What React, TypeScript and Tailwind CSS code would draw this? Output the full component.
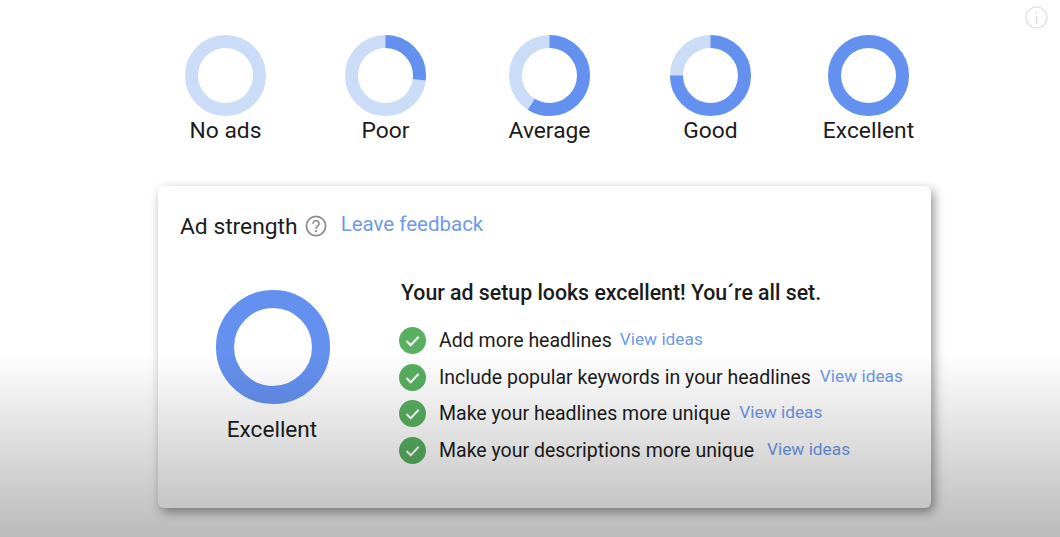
import React from "react"

const BLUE = "#6491ef"
const LIGHT = "#cbdcf8"

function Ring({ value, size, stroke }: { value: number; size: number; stroke: number }) {
    const r = (size - stroke) / 2
    return (
        <svg width={size} height={size} viewBox={`0 0 ${size} ${size}`} className="block shrink-0">
            <circle cx={size / 2} cy={size / 2} r={r} fill="none" stroke={LIGHT} strokeWidth={stroke} />
            {value > 0 && (
                <circle
                    cx={size / 2}
                    cy={size / 2}
                    r={r}
                    fill="none"
                    stroke={BLUE}
                    strokeWidth={stroke}
                    pathLength={100}
                    strokeDasharray={`${value} ${100 - value}`}
                    transform={`rotate(-90 ${size / 2} ${size / 2})`}
                />
            )}
        </svg>
    )
}

function Check() {
    return (
        <svg width="27" height="27" viewBox="0 0 27 27" className="block shrink-0">
            <circle cx="13.5" cy="13.5" r="13.5" fill="#58b060" />
            <path d="M7.5 14l4.2 4.2 8-8.4" fill="none" stroke="#fff" strokeWidth="2" />
        </svg>
    )
}

const levels = [
    { label: "No ads", value: 0, className: "ml-[185px]" },
    { label: "Poor", value: 27, className: "ml-[79px]" },
    { label: "Average", value: 59, className: "ml-[83px]" },
    { label: "Good", value: 75, className: "ml-[80px]" },
    { label: "Excellent", value: 100, className: "ml-[77px]" },
]

const tips = [
    { text: "Add more headlines", gap: "ml-[8px]" },
    { text: "Include popular keywords in your headlines", gap: "ml-[9px]" },
    { text: "Make your headlines more unique", gap: "ml-[9px]" },
    { text: "Make your descriptions more unique", gap: "ml-[13px]" },
]

export default function App() {
    return (
        <div className="relative w-[1060px] h-[537px] overflow-hidden bg-white font-['Roboto',sans-serif] text-[#1c1c1c]">
            {/* Level rings */}
            <div className="flex items-start pt-[35px]">
                {levels.map((level) => (
                    <div key={level.label} className={`flex flex-col items-center w-[81px] ${level.className}`}>
                        <Ring value={level.value} size={81} stroke={13} />
                        <span className="mt-[2px] text-[22.8px] leading-[26px] whitespace-nowrap">{level.label}</span>
                    </div>
                ))}
            </div>

            {/* Card */}
            <div className="mt-[42px] ml-[158px] w-[773px] h-[322px] rounded-[6px] bg-white shadow-[3px_4px_11px_rgba(0,0,0,0.42)] px-[22px] pt-[25px]">
                <div className="flex items-center h-[28px]">
                    <span className="text-[22.8px] leading-[28px] mt-[4px]">Ad strength</span>
                    <svg width="22" height="22" viewBox="0 0 22 22" className="ml-[7px] mt-[2px]">
                        <circle cx="11" cy="11" r="9.6" fill="none" stroke="#8e8e8e" strokeWidth="1.8" />
                        <path d="M8 8.7a3 3 0 1 1 4.8 2.4c-1.1.8-1.8 1.3-1.8 2.7" fill="none" stroke="#8e8e8e" strokeWidth="1.7" />
                        <circle cx="11" cy="16.2" r="1.1" fill="#8e8e8e" />
                    </svg>
                    <span className="ml-[14px] -mt-[3px] text-[20.5px] leading-[28px] text-[#6f9ae8]">Leave feedback</span>
                </div>

                <div className="flex mt-[26px]">
                    <div className="flex flex-col items-center w-[185px] pt-[25px]">
                        <Ring value={100} size={114} stroke={18} />
                        <span className="mt-[13px] text-[22.6px] leading-[26px] -ml-[1px]">Excellent</span>
                    </div>
                    <div className="ml-[34px] pt-[15px]">
                        <h2 className="ml-[2px] text-[21.3px] leading-[26px] font-medium">Your ad setup looks excellent! You´re all set.</h2>
                        <div className="mt-[21px] flex flex-col gap-[9.7px]">
                            {tips.map((tip) => (
                                <div key={tip.text} className="flex items-center h-[27px] whitespace-nowrap">
                                    <Check />
                                    <span className="ml-[13px] text-[19.5px] leading-[27px]">{tip.text}</span>
                                    <span className={`${tip.gap} -mt-[3px] text-[17.3px] leading-[24px] text-[#6f9ae8]`}>View ideas</span>
                                </div>
                            ))}
                        </div>
                    </div>
                </div>
            </div>

            {/* Info button */}
            <svg width="23" height="23" viewBox="0 0 23 23" className="absolute left-[1025px] top-[6px]">
                <circle cx="11.5" cy="11.5" r="10.5" fill="none" stroke="#dedede" strokeWidth="1.2" />
                <rect x="10.7" y="9.5" width="1.6" height="8" fill="#dedede" />
                <rect x="10.7" y="6" width="1.6" height="1.8" fill="#dedede" />
            </svg>

            {/* Video bottom shade */}
            <div className="absolute inset-x-0 bottom-0 h-[185px] pointer-events-none bg-gradient-to-b from-transparent to-black/[0.27]" />
        </div>
    )
}
